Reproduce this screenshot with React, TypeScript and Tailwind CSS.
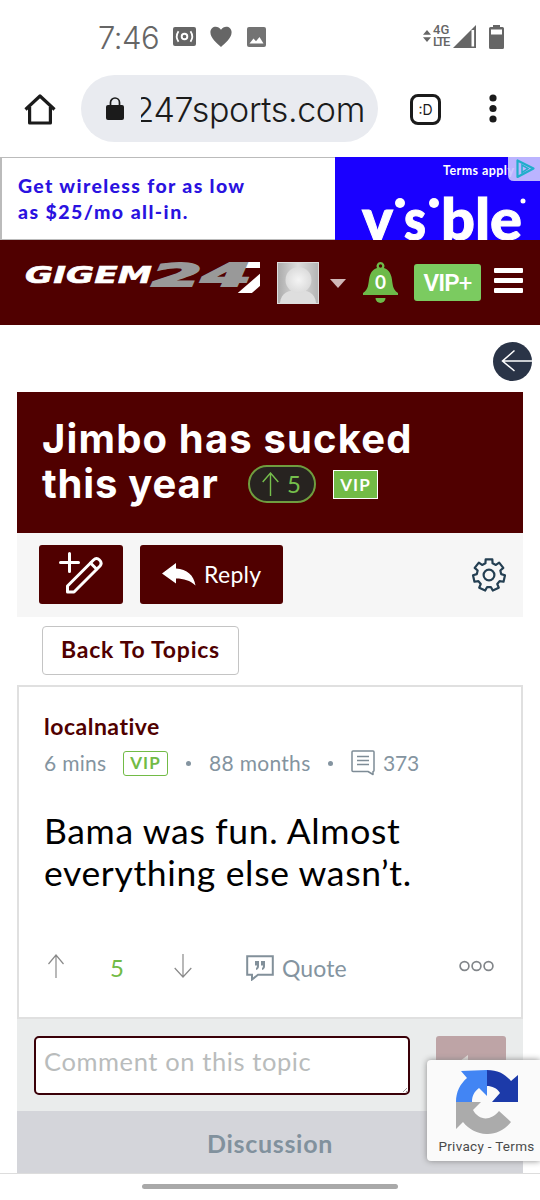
import React from 'react';

const gearPoints = () => {
    const pts: string[] = [];
    for (let i = 0; i < 7; i++) {
        const base = (i * 360) / 7 - 90;
        [[-17, 12.2], [-12, 16], [12, 16], [17, 12.2]].forEach(([offset, radius]) => {
            const angle = ((base + offset) * Math.PI) / 180;
            pts.push(`${(18 + radius * Math.cos(angle)).toFixed(2)},${(18 + radius * Math.sin(angle)).toFixed(2)}`);
        });
    }
    return pts.join(' ');
};

const StatusBar: React.FC = () => (
    <div className="h-[75px] flex items-center text-[#666]">
        <span className="ml-[98px] w-[75px] text-[31px] leading-none font-light tracking-[-0.5px] whitespace-nowrap font-['Inter',sans-serif]">7:46</span>
        <svg width="23" height="19" viewBox="0 0 23 19" className="-mt-0.5">
            <rect width="23" height="19" rx="2" fill="#666" />
            <circle cx="11.5" cy="9.5" r="2.8" fill="none" stroke="#fff" strokeWidth="1.9" />
            <path d="M5.5 4.2Q2 9.5 5.5 14.8M17.5 4.2Q21 9.5 17.5 14.8" fill="none" stroke="#fff" strokeWidth="1.8" />
        </svg>
        <svg width="22" height="22" viewBox="0 0 22 22" className="ml-[14px] -mt-0.5">
            <path d="M11 21C7 17.5.4 12 .4 6.3.4 0 8-1.3 11 3.8 14-1.3 21.6 0 21.6 6.3 21.6 12 15 17.5 11 21Z" fill="#666" />
        </svg>
        <svg width="19" height="20" viewBox="0 0 19 20" className="ml-[15px] -mt-0.5">
            <rect width="19" height="20" rx="2" fill="#737373" />
            <path d="M2.5 16.5 6.5 11.5 9 14.2 12.5 10 16.5 16.5Z" fill="#fff" />
        </svg>
        <svg width="8" height="12" viewBox="0 0 8 12" className="ml-[157px] -mt-1">
            <path d="M0 4.8 4 0 8 4.8ZM0 7.2 4 12 8 7.2Z" fill="#666" />
        </svg>
        <div className="ml-[2px] -mt-1 w-[18px] flex flex-col text-[13px] leading-[12px] font-medium whitespace-nowrap font-['Roboto',sans-serif]">
            <span>4G</span>
            <span className="tracking-[-1.7px]">LTE</span>
        </div>
        <svg width="23" height="23" viewBox="0 0 23 23" className="ml-[2px] -mt-0.5">
            <path d="M0 23 23 0V23Z" fill="#666" />
            <path d="M19.800 5V21.500" stroke="#fff" strokeWidth="2.600" />
        </svg>
        <svg width="15" height="24" viewBox="0 0 15 24" className="ml-[13px] -mt-0.5">
            <path d="M4 0H11V2H13.5Q15 2 15 3.500V22.500Q15 24 13.500 24H1.500Q0 24 0 22.500V3.500Q0 2 1.500 2H4Z" fill="#666" />
            <rect x="2" y="4.500" width="11" height="5" fill="#fff" />
        </svg>
    </div>
);

const UrlBar: React.FC = () => (
    <div className="h-[82px] flex items-start">
        <svg width="32" height="32" viewBox="0 0 32 32" className="ml-[24px] mt-[18px]" fill="none" stroke="#1b1b1b" strokeWidth="3.200">
            <path d="M1.500 16.500 16 3 30.500 16.500M5.600 14V30H26.400V14" strokeLinejoin="round" />
        </svg>
        <div className="ml-[25px] w-[297px] h-[67px] rounded-full bg-[#e9ebf0] flex items-center">
            <svg width="18" height="23" viewBox="0 0 18 23" className="ml-[25px]">
                <rect y="8" width="18" height="15" rx="2" fill="#1b1b1b" />
                <path d="M4.500 9V5.500A4.500 4.500 0 0 1 13.500 5.500V9" fill="none" stroke="#1b1b1b" strokeWidth="1.700" />
            </svg>
            <div className="ml-[17px] pt-[2px] w-[224px] overflow-hidden flex justify-end">
                <span className="text-[34px] leading-[48px] font-light text-[#1b1b1b] tracking-[-0.35px] font-['Inter',sans-serif]">247sports.com</span>
            </div>
        </div>
        <div className="ml-[32px] mt-[19px] w-[31px] h-[31px] rounded-[8px] border-[3px] border-[#1b1b1b] flex items-center justify-center text-[14px] text-[#1b1b1b] font-['Inter',sans-serif]">:D</div>
        <svg width="8" height="30" viewBox="0 0 8 30" className="ml-[48px] mt-[19px]" fill="#1b1b1b">
            <circle cx="4" cy="4" r="3.600" />
            <circle cx="4" cy="14.500" r="3.600" />
            <circle cx="4" cy="25" r="3.600" />
        </svg>
    </div>
);

const AdBanner: React.FC = () => (
    <div className="h-[83px] flex bg-white overflow-hidden">
        <div className="w-[335px] border-t border-l-2 border-b border-[#bbb] pl-4 pt-[15px] text-[19.5px] leading-[26px] font-black text-[#2a12e0] font-['Lato',sans-serif] whitespace-nowrap">
            <p className="tracking-[1.35px]">Get wireless for as low</p>
            <p className="tracking-[1.45px]">as $25/mo all-in.</p>
        </div>
        <svg width="205" height="84" viewBox="-1 0 205 84" fontFamily="Lato, sans-serif" fill="#fff">
            <rect x="-1" width="205" height="84" fill="#1a00ff" />
            <text x="107" y="18" fontSize="12.500" fontWeight="700" textLength="71">Terms apply</text>
            <g fontSize="58" fontWeight="900" stroke="#fff" strokeWidth="1">
                <text x="26" y="83" textLength="31" lengthAdjust="spacingAndGlyphs">v</text>
                <text x="68" y="83" textLength="22" lengthAdjust="spacingAndGlyphs">s</text>
                <text x="105" y="83" textLength="81" lengthAdjust="spacingAndGlyphs">ble</text>
            </g>
            <circle cx="64" cy="46" r="5" />
            <circle cx="98" cy="46" r="5" />
            <circle cx="187" cy="44" r="2.500" />
            <path d="M172 0H204V24H178Q172 24 172 18Z" fill="#c9c3ff" fillOpacity=".92" />
            <path d="M181.500 3.500V20L197.500 11.500Z" fill="none" stroke="#20aecb" strokeWidth="2.200" strokeLinejoin="round" />
            <path d="M186 8V15.500L192 11.600Z" fill="none" stroke="#20aecb" strokeWidth="1.500" />
        </svg>
    </div>
);

const SiteHeader: React.FC = () => (
    <header className="h-[85px] bg-[#500000] flex items-start">
        <svg width="236" height="40" viewBox="0 0 236 40" className="ml-[24px] mt-[16px]" fontFamily="DejaVu Sans, sans-serif" fontWeight="700" fontStyle="italic">
            <text x="1" y="27" fontSize="23.500" textLength="127" lengthAdjust="spacingAndGlyphs" fill="#fff" stroke="#fff" strokeWidth=".6">GIGEM</text>
            <text x="208" y="37" fontSize="42" textLength="52" lengthAdjust="spacingAndGlyphs" fill="#fff">7</text>
            <text x="128" y="30" fontSize="32" textLength="99" lengthAdjust="spacingAndGlyphs" fill="#999" stroke="#999" strokeWidth="2">24</text>
        </svg>
        <svg width="42" height="42" viewBox="0 0 42 42" className="ml-[17px] mt-[22px]">
            <defs>
                <radialGradient id="head" cx=".5" cy=".5" r=".5">
                    <stop offset="0" stopColor="#f4f4f4" />
                    <stop offset="1" stopColor="#dcdcdc" />
                </radialGradient>
                <linearGradient id="backdrop">
                    <stop offset="0" stopColor="#aaa" />
                    <stop offset=".5" stopColor="#ddd" />
                    <stop offset="1" stopColor="#b4b4b4" />
                </linearGradient>
            </defs>
            <rect x=".5" y=".5" width="41" height="41" fill="url(#backdrop)" stroke="#ddd" />
            <path d="M3 41C4 31 11 28 21 28S38 31 39 41Z" fill="#dedede" />
            <circle cx="21.500" cy="18" r="13" fill="url(#head)" />
        </svg>
        <svg width="16" height="9" viewBox="0 0 16 9" className="ml-[11px] mt-[39px]">
            <path d="M0 0H16L8 9Z" fill="#d0b8b8" />
        </svg>
        <svg width="35" height="42" viewBox="0 0 35 42" className="ml-[17px] mt-[22px]">
            <path d="M0 33V31C6 27 5 22 6.500 15 8 9 11 7 14 6A4 4 0 1 1 21 6C24 7 27 9 28.500 15 30 22 29 27 35 31V33Z" fill="#6dba49" />
            <circle cx="17.500" cy="4" r="1.700" fill="#500000" />
            <path d="M12.500 36H22.500A5 5 0 0 1 12.500 36Z" fill="#6dba49" />
            <text x="17.500" y="26.500" textAnchor="middle" fontSize="19" fontWeight="700" fill="#fff" fontFamily="Lato, sans-serif" textLength="11" lengthAdjust="spacingAndGlyphs">0</text>
        </svg>
        <div className="ml-[16px] mt-[24px] w-[67px] h-[37px] rounded-[3px] bg-[#7bcb60] flex items-center justify-center text-[24px] font-semibold tracking-[-0.9px] text-white font-['Roboto',sans-serif]">
            VIP<span className="font-normal">+</span>
        </div>
        <div className="ml-[13px] mt-[28px] flex flex-col gap-[5px]">
            <div className="w-[29px] h-[5px] rounded-[1px] bg-white" />
            <div className="w-[29px] h-[5px] rounded-[1px] bg-white" />
            <div className="w-[29px] h-[5px] rounded-[1px] bg-white" />
        </div>
    </header>
);

const TopicHeading: React.FC = () => (
    <div>
        <div className="h-[67px] flex justify-end pt-[17px] pr-[8px]">
            <svg width="39" height="39" viewBox="0 0 39 39">
                <circle cx="19.500" cy="19.500" r="19.500" fill="#2a3447" />
                <path d="M21.500 8.500 9.500 19 21.500 29M9.500 19H39" fill="none" stroke="#fff" strokeWidth="1.500" />
            </svg>
        </div>
        <div className="mx-[17px] h-[141px] bg-[#500000] pl-[25px] pt-[24px] text-white">
            <h1 className="text-[40px] leading-[45px] font-bold font-['Inter',sans-serif]">
                <span className="block tracking-[1.15px] whitespace-nowrap">Jimbo has sucked</span>
                <span className="flex items-center font-['Lato',sans-serif]">
                    <span className="w-[206px] tracking-[0.8px] whitespace-nowrap font-['Inter',sans-serif]">this year</span>
                    <span className="w-[68px] h-[38px] rounded-full border-2 border-[#6f9d3f] bg-[#272320] flex items-center pl-[12px]">
                        <svg width="17" height="24" viewBox="0 0 17 24" fill="none" stroke="#76bf4c" strokeWidth="1.400">
                            <path d="M8.500 24V1M.7 10 8.500 1 16.300 10" />
                        </svg>
                        <span className="ml-[8px] text-[24px] leading-none font-normal text-[#76bf4c]">5</span>
                    </span>
                    <span className="ml-[17px] mt-[2px] w-[45px] h-[29px] border border-white bg-[#72bb46] flex items-center justify-center text-[17px] leading-none tracking-[1px]">VIP</span>
                </span>
            </h1>
        </div>
        <div className="mx-[17px] h-[84px] bg-[#f6f6f6] flex items-center pl-[22px] pr-[16px]">
            <button className="-mt-px w-[84px] h-[59px] rounded-[3px] bg-[#500000] flex items-center justify-center">
                <svg width="44" height="42" viewBox="0 0 44 42" className="-mt-1" fill="none" stroke="#fff" strokeWidth="3" strokeLinecap="round">
                    <path d="M10.500 1.500V19.500M1.500 10.500H19.500" />
                    <path d="M8.500 40V34L34.500 8Q37.500 5 40.500 8T41 14L15 40Z" strokeLinejoin="round" />
                    <path d="M31.500 11 37.500 17" />
                </svg>
            </button>
            <button className="-mt-px ml-[17px] w-[143px] h-[59px] rounded-[3px] bg-[#500000] text-white flex items-center pl-[22px]">
                <svg width="34" height="23" viewBox="0 0 34 23">
                    <path d="M0 10.500 14 0V5.500C25 6 32 12.500 33.500 22.500 28 17.500 22 15.500 14 15.500V20.500Z" fill="#fff" />
                </svg>
                <span className="ml-[8px] text-[23px] tracking-[0.3px] font-['Lato',sans-serif]">Reply</span>
            </button>
            <svg width="36" height="36" viewBox="0 0 36 36" className="ml-auto" fill="none" stroke="#243f52" strokeWidth="2.200" strokeLinejoin="round">
                <polygon points={gearPoints()} />
                <circle cx="18" cy="18" r="5.400" />
            </svg>
        </div>
        <div className="h-[68px] pl-[42px] pt-[9px]">
            <button className="w-[197px] h-[49px] rounded-[4px] border border-[#c4c4c4] pb-[2px] text-[23px] font-bold tracking-[0.75px] text-[#500000] font-['Lato',sans-serif]">Back To Topics</button>
        </div>
    </div>
);

const Post: React.FC = () => (
    <article className="mx-[17px] h-[334px] border-2 border-[#e0e0e0] pl-[25px] pr-[27px] pt-[24px] font-['Lato',sans-serif]">
        <h2 className="text-[23px] leading-[30px] font-bold tracking-[0.5px] text-[#500000]">localnative</h2>
        <div className="mt-[8px] h-[28px] flex items-center text-[21px] leading-[28px] text-[#8494a0] whitespace-nowrap">
            <span className="w-[79px] tracking-[0.3px]">6 mins</span>
            <span className="w-[45px] h-[25px] rounded-[3px] border-[1.5px] border-[#72bb46] flex items-center justify-center text-[17px] font-bold tracking-[1px] text-[#72bb46]">VIP</span>
            <span className="ml-[18px] w-[5px] h-[5px] rounded-full bg-[#8494a0]" />
            <span className="ml-[18px] w-[119px] tracking-[0.3px]">88 months</span>
            <span className="w-[5px] h-[5px] rounded-full bg-[#8494a0]" />
            <svg width="24" height="26" viewBox="0 0 24 26" className="ml-[18px]" fill="none" stroke="#7e8c96" strokeWidth="1.500">
                <path d="M2 1H22Q23 1 23 2V20.500Q23 21.500 22 21.500V24.500L17 21.500H2Q1 21.500 1 20.500V2Q1 1 2 1ZM6 6.500H18M6 10.500H18M6 14.500H18" strokeLinejoin="round" />
            </svg>
            <span className="ml-[8px] tracking-[-0.2px]">373</span>
        </div>
        <div className="mt-[33px] text-[35.5px] leading-[42px] text-black whitespace-nowrap">
            <p className="tracking-[0.65px]">Bama was fun. Almost</p>
            <p className="tracking-[0.65px]">everything else wasn’t.</p>
        </div>
        <div className="mt-[54px] h-[40px] flex items-center text-[22px] text-[#8494a0]">
            <svg width="16" height="24" viewBox="0 0 16 24" className="ml-[4px] -mt-1" fill="none" stroke="#8a8a8a" strokeWidth="1.200">
                <path d="M8 24V1M.5 10 8 1 15.500 10" />
            </svg>
            <span className="ml-[46px] w-[15px] text-[24px] text-[#72bb46]">5</span>
            <svg width="18" height="24" viewBox="0 0 18 24" className="ml-[49px] -mt-1" fill="none" stroke="#8a8a8a" strokeWidth="1.200">
                <path d="M9 0V23M.7 14 9 23 17.300 14" />
            </svg>
            <svg width="28" height="26" viewBox="0 0 28 26" className="ml-[54px]">
                <path d="M1.200 1.200H26.800V19.800H12L6 24.500V19.800H1.200Z" fill="none" stroke="#82909a" strokeWidth="2" />
                <path d="M9 6H13V11Q13 14 10 15V13Q11 12.500 11 10.500H9ZM15 6H19V11Q19 14 16 15V13Q17 12.500 17 10.500H15Z" fill="#82909a" />
            </svg>
            <span className="ml-[8px] text-[23px] tracking-[0.1px]">Quote</span>
            <svg width="35" height="12" viewBox="0 0 35 12" className="ml-auto -mt-1" fill="none" stroke="#82868a" strokeWidth="1.700">
                <circle cx="5.500" cy="6" r="4.400" />
                <circle cx="17.500" cy="6" r="4.400" />
                <circle cx="29.500" cy="6" r="4.400" />
            </svg>
        </div>
    </article>
);

const CommentBox: React.FC = () => (
    <div className="mx-[17px] font-['Lato',sans-serif]">
        <div className="h-[92px] bg-[#eaecec] flex items-start pt-[17px] pl-[17px]">
            <div className="w-[376px] h-[59px] rounded-[5px] border-2 border-[#3a0008] bg-white flex pl-[8px] text-[25.5px] leading-[47px] tracking-[0.6px] text-[#b9bcbc] whitespace-nowrap">
                <span>Comment on this topic</span>
                <svg width="6" height="6" viewBox="0 0 6 6" className="ml-auto mt-auto" stroke="#888" strokeWidth=".8">
                    <path d="M1 5 5 1M4 5 5 4" />
                </svg>
            </div>
            <div className="ml-[26px] w-[70px] h-[59px] rounded-[3px] bg-[#bea4a6] flex justify-center pt-[19px]">
                <svg width="34" height="23" viewBox="0 0 34 23">
                    <path d="M0 10.500 14 0V5.500C25 6 32 12.500 33.500 22.500 28 17.500 22 15.500 14 15.500V20.500Z" fill="#e6e0dd" />
                </svg>
            </div>
        </div>
        <div className="h-[62px] bg-[#d4d5da] flex items-center justify-center pt-[3px] text-[25px] font-bold tracking-[0.7px] text-[#81919d]">Discussion</div>
    </div>
);

const RecaptchaBadge: React.FC = () => (
    <div className="absolute left-[427px] top-[1060px] w-[113px] h-[101px] rounded-l-[4px] bg-[#fafafa] shadow-[0_0_6px_#888] flex flex-col items-center">
        <svg width="64" height="64" viewBox="0 0 64 64" className="mt-[10px] mr-[-6px]">
            <path d="M32 0C43 0 50 4 56 11L63 5V32H37L45 23C42 18 37 16 32 16Z" fill="#1c3aa9" />
            <path d="M32 0V26L24 18C19 22 17 26 17 32H1C1 22 5 14 12 8L6 1 Z" fill="#4285f4" />
            <path d="M1 32H26L18 40C24 51 36 51 44 41L56 52C42 69 20 67 8 52L1 59Z" fill="#ababab" />
        </svg>
        <p className="mt-[3px] ml-[6px] text-[13.5px] leading-[18px] tracking-[0.3px] whitespace-nowrap text-[#4a4a4a] font-['Roboto',sans-serif]">Privacy - Terms</p>
    </div>
);

const App: React.FC = () => {
    return (
        <div className="relative w-[540px] h-[1200px] bg-white overflow-hidden">
            <StatusBar />
            <UrlBar />
            <AdBanner />
            <SiteHeader />
            <TopicHeading />
            <Post />
            <CommentBox />
            <div className="h-[27px] border-t border-[#ddd] flex justify-center pt-[10px] bg-white">
                <div className="w-[256px] h-[5px] rounded-full bg-[#a9a9a9]" />
            </div>
            <RecaptchaBadge />
        </div>
    );
};

export default App;
